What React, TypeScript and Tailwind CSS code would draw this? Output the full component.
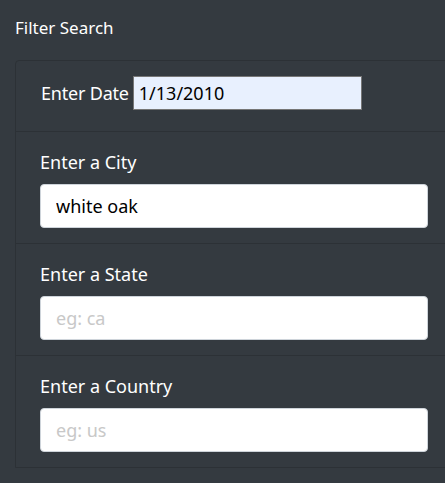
export default function App() {
  const font = { fontFamily: '"Noto Sans", "Open Sans", sans-serif' };
  return (
    <div className="h-[483px] w-[445px] overflow-hidden bg-[#343a40] text-white" style={font}>
      <div className="px-[15px] pt-[15px] pb-[19px]">
        <h1 className="text-[17px] leading-[26px]">Filter Search</h1>
      </div>
      <div className="ml-[15px] w-[438px] rounded-tl-[4px] border border-[#2c3136]">
        <div className="flex h-[70px] items-start px-[25px] pt-[15px]">
          <label className="mr-[4px] text-[18px] leading-[34px] tracking-[-0.2px]">Enter Date</label>
          <input
            defaultValue="1/13/2010"
            className="h-[34px] w-[229px] border border-[#767676] bg-[#e8f0fe] px-[5px] text-[18px] text-black outline-none"
          />
        </div>
        {[
          { label: "Enter a City", value: "white oak", placeholder: "" },
          { label: "Enter a State", value: "", placeholder: "eg: ca" },
          { label: "Enter a Country", value: "", placeholder: "eg: us" },
        ].map((f) => (
          <div key={f.label} className="flex h-[112px] flex-col border-t border-[#2c3136] px-[24px] pt-[17px]">
            <label className="mb-[8px] text-[18px] leading-[27px]">{f.label}</label>
            <input
              defaultValue={f.value}
              placeholder={f.placeholder}
              className="h-[44px] w-full rounded-[4px] border border-[#ced4da] bg-white px-[15px] text-[18px] text-black outline-none placeholder:text-[#c8c8c8]"
            />
          </div>
        ))}
      </div>
    </div>
  );
}
